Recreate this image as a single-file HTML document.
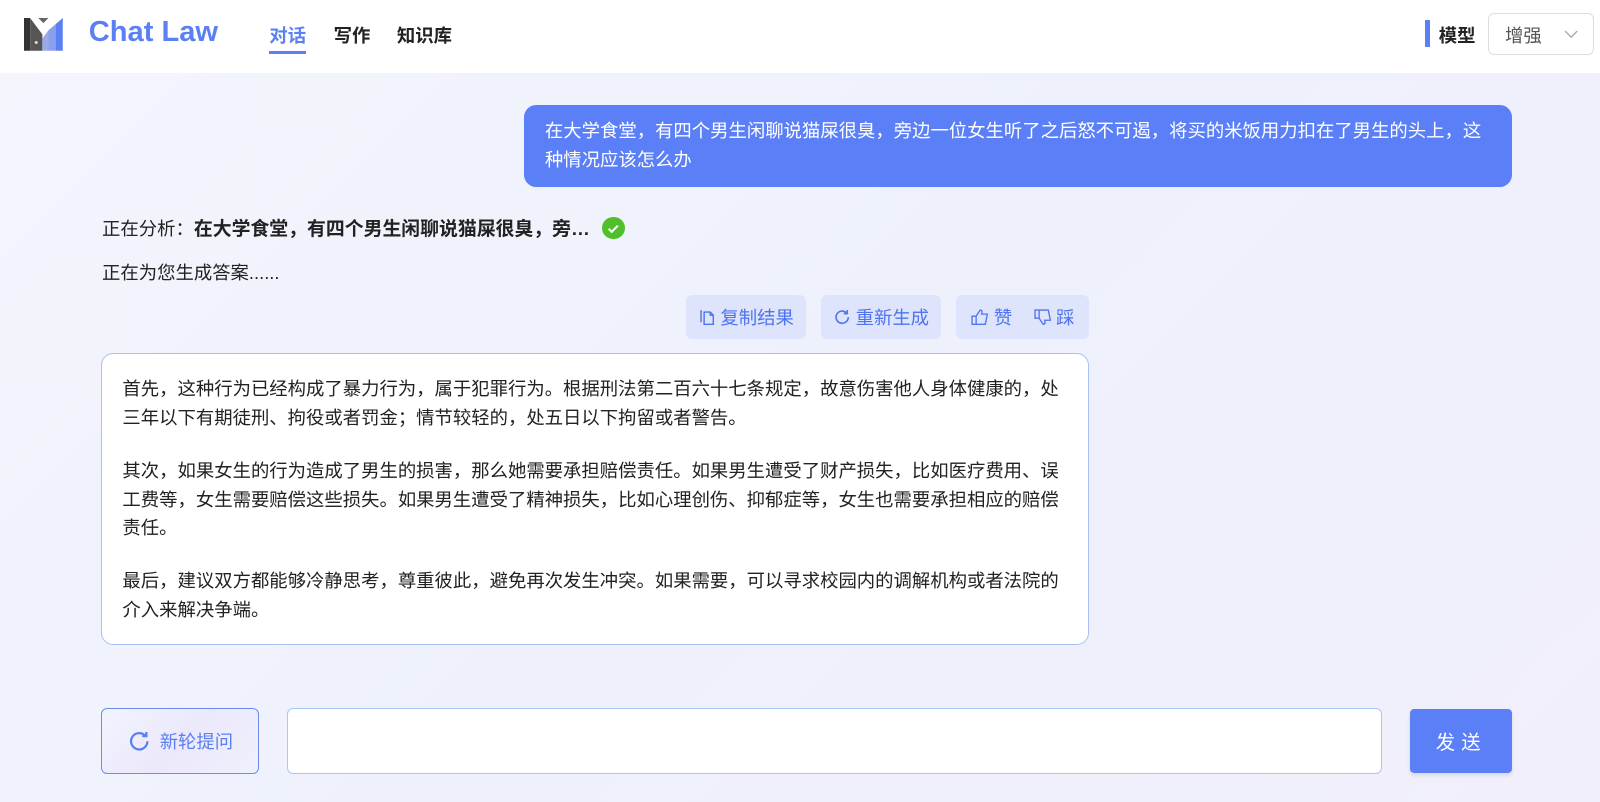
<!DOCTYPE html>
<html><head><meta charset="utf-8"><style>
*{box-sizing:border-box;margin:0;padding:0}
html,body{width:1600px;height:802px;overflow:hidden}
body{font-family:"Liberation Sans","Noto Sans CJK SC",sans-serif;background:linear-gradient(135deg,#f4f5fd 0%,#eef1fc 50%,#f1effb 100%);color:#222}
.w{zoom:1.0204;position:relative;width:1568px;height:786px}
.hdr{position:absolute;left:0;top:0;width:1568px;height:72px;background:#fff}
.logo{position:absolute;left:24px;top:16px}
.brand{position:absolute;left:87px;top:16px;font-size:28.5px;font-weight:bold;color:#5b80f4}
.nav{position:absolute;top:22px;font-size:18px;font-weight:bold;color:#222}
.model{position:absolute;left:1397px;top:20px;width:4px;height:26px;background:#5b80f4}
.mlabel{position:absolute;left:1410px;top:22px;font-size:18px;font-weight:bold}
.sel{position:absolute;left:1458px;top:13px;width:104px;height:41px;border:1px solid #ddd;border-radius:6px;background:#fff;font-size:18px;color:#555;padding:8px 0 0 16px}
.bubble{position:absolute;left:514px;top:103px;width:968px;height:80px;background:#5b7ff6;border-radius:12px;color:#fff;font-size:18px;line-height:28px;padding:12px 20px}
.t{position:absolute;left:100px;font-size:18px;display:flex;align-items:center;white-space:nowrap}
.chk{display:inline-block;width:22px;height:22px;border-radius:50%;background:#4fc02c;margin-left:12px}
.act{position:absolute;top:289px;height:43px;background:#dde4fb;border-radius:6px;color:#4f74ee;font-size:18px;display:flex;align-items:center;justify-content:center;gap:4px;white-space:nowrap}
.ans{position:absolute;left:99px;top:346px;width:968px;height:286px;background:#fff;border:1px solid #a9c0f5;border-radius:12px;padding:21px 20px;font-size:18px;line-height:28px;color:#222}
.ans p{margin-bottom:24px}
.newq{position:absolute;left:99px;top:694px;width:155px;height:65px;border:1.5px solid #6c8cf2;border-radius:6px;background:linear-gradient(135deg,#f1f4fe,#ece8fb 50%,#eef1fd);color:#5b7ff0;font-size:18px;display:flex;align-items:center;justify-content:center;gap:8px}
.inp{position:absolute;left:281px;top:694px;width:1073px;height:65px;border:1.5px solid #a9c6f6;border-radius:6px;background:#fff}
.send{position:absolute;left:1382px;top:695px;width:100px;height:63px;background:#5b7ff6;border-radius:4px;color:#fff;font-size:19px;display:flex;align-items:center;justify-content:center;letter-spacing:6px;box-shadow:0 2px 4px rgba(0,0,0,.1)}
</style></head><body><div class="w">
<div class="hdr">
<svg class="logo" width="44" height="36" viewBox="0 0 44 36">
<polygon points="0,2 6,2 6,34 0,34" fill="#333"/>
<polygon points="6,2 18,18 18,34 6,34" fill="#555"/>
<polygon points="14,2 24,2 19,7" fill="#666"/>
<polygon points="18,22 24,14 24,34 18,34" fill="#9aa9e8"/>
<polygon points="24,14 31,8 31,34 24,34" fill="#8aa0ee"/>
<polygon points="31,8 38,2 38,34 31,34" fill="#5b80f4"/>
<circle cx="12" cy="26" r="1.5" fill="#ddd"/>
</svg>
<div class="brand">Chat Law</div>
<div class="nav" style="left:264px;color:#5b80f4">对话</div>
<div style="position:absolute;left:264px;top:50px;width:36px;height:3px;background:#5b80f4"></div>
<div class="nav" style="left:327px">写作</div>
<div class="nav" style="left:389px">知识库</div>
<div class="model"></div><div class="mlabel">模型</div>
<div class="sel">增强<svg style="position:absolute;left:74px;top:15px" width="14" height="9" viewBox="0 0 14 9"><path d="M1 1l6 6 6-6" stroke="#aaa" stroke-width="1.3" fill="none"/></svg></div>
</div>
<div class="bubble">在大学食堂，有四个男生闲聊说猫屎很臭，旁边一位女生听了之后怒不可遏，将买的米饭用力扣在了男生的头上，这种情况应该怎么办</div>
<div class="t" style="top:210px">正在分析：<b style="font-size:18.5px">在大学食堂，有四个男生闲聊说猫屎很臭，旁…</b><span class="chk"><svg width="22" height="22" viewBox="0 0 22 22"><path d="M6.5 11.5l3 3 6-6" stroke="#fff" stroke-width="2" fill="none"/></svg></span></div>
<div class="t" style="top:254px">正在为您生成答案......</div>
<div class="act" style="left:672px;width:118px"><svg width="18" height="18" viewBox="0 0 18 18" fill="none" stroke="#4f74ee" stroke-width="1.4"><path d="M3 2v12"/><path d="M6 4h6l3 3v9H6z"/><path d="M12 4v3h3"/></svg>复制结果</div>
<div class="act" style="left:805px;width:117px"><svg width="18" height="18" viewBox="0 0 18 18" fill="none" stroke="#4f74ee" stroke-width="1.6"><path d="M15 9a6 6 0 1 1-2-4.5"/><path d="M14 2v3.5h-3.5"/></svg>重新生成</div>
<div class="act" style="left:937px;width:130px;gap:3px"><svg width="20" height="18" viewBox="0 0 20 18" fill="none" stroke="#4f74ee" stroke-width="1.3"><path d="M2 8h4v8H2zM6 8l4-6c2 0 2 2 1.5 4H17l-2 10H6"/></svg>赞<span style="width:14px"></span><svg width="20" height="18" viewBox="0 0 20 18" fill="none" stroke="#4f74ee" stroke-width="1.3"><path d="M2 2h4v8H2zM6 10l4 6c2 0 2-2 1.5-4H17L15 2H6"/></svg>踩</div>
<div class="ans">
<p>首先，这种行为已经构成了暴力行为，属于犯罪行为。根据刑法第二百六十七条规定，故意伤害他人身体健康的，处三年以下有期徒刑、拘役或者罚金；情节较轻的，处五日以下拘留或者警告。</p>
<p>其次，如果女生的行为造成了男生的损害，那么她需要承担赔偿责任。如果男生遭受了财产损失，比如医疗费用、误工费等，女生需要赔偿这些损失。如果男生遭受了精神损失，比如心理创伤、抑郁症等，女生也需要承担相应的赔偿责任。</p>
<p>最后，建议双方都能够冷静思考，尊重彼此，避免再次发生冲突。如果需要，可以寻求校园内的调解机构或者法院的介入来解决争端。</p>
</div>
<div class="newq"><svg width="24" height="24" viewBox="0 0 24 24" fill="none" stroke="#5b7ff0" stroke-width="2.2"><path d="M20 12a8 8 0 1 1-2.5-5.8"/><path d="M19 3v4h-4"/></svg>新轮提问</div>
<div class="inp"></div>
<div class="send">发送</div>
</div></body></html>
